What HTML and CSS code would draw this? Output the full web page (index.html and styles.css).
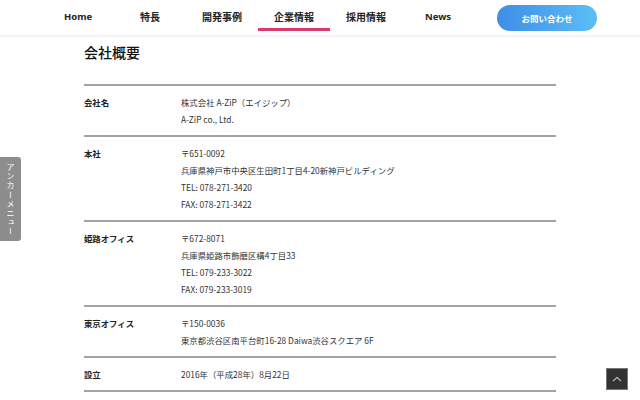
FILE: index.html
```html
<!DOCTYPE html>
<html lang="ja">
<head>
  <meta charset="UTF-8" />
  <meta name="viewport" content="width=device-width, initial-scale=1.0"/>
  <title>会社概要 | 株式会社 A-ZiP</title>
  <link rel="stylesheet" href="styles.css">
</head>
<body>
  <header class="site-header">
    <nav class="global-nav">
      <a href="#" class="nav-item nav-en">Home</a>
      <a href="#" class="nav-item">特長</a>
      <a href="#" class="nav-item">開発事例</a>
      <a href="#" class="nav-item is-current">企業情報</a>
      <a href="#" class="nav-item">採用情報</a>
      <a href="#" class="nav-item nav-en">News</a>
    </nav>
    <a href="#" class="contact-btn">お問い合わせ</a>
  </header>

  <main class="company">
    <h2 class="company-title">会社概要</h2>

    <dl class="company-table">
      <div class="company-row">
        <dt>会社名</dt>
        <dd>株式会社 A-ZiP（エイジップ）<br>A-ZiP co., Ltd.</dd>
      </div>
      <div class="company-row">
        <dt>本社</dt>
        <dd>〒651-0092<br>兵庫県神戸市中央区生田町1丁目4-20新神戸ビルディング<br>TEL: 078-271-3420<br>FAX: 078-271-3422</dd>
      </div>
      <div class="company-row">
        <dt>姫路オフィス</dt>
        <dd>〒672-8071<br>兵庫県姫路市飾磨区構4丁目33<br>TEL: 079-233-3022<br>FAX: 079-233-3019</dd>
      </div>
      <div class="company-row">
        <dt>東京オフィス</dt>
        <dd>〒150-0036<br>東京都渋谷区南平台町16-28 Daiwa渋谷スクエア 6F</dd>
      </div>
      <div class="company-row">
        <dt>設立</dt>
        <dd>2016年（平成28年）8月22日</dd>
      </div>
    </dl>
  </main>

  <!-- side anchor tab -->
  <a href="#" class="anchor-tab">アンカーメニュー</a>

  <!-- page top -->
  <a href="#" class="pagetop" aria-label="ページトップへ">
    <svg width="10" height="6" viewBox="0 0 10 6"><path d="M1 5.2 L5 1.4 L9 5.2" fill="none" stroke="#ccc" stroke-width="1.1"/></svg>
  </a>
</body>
</html>
```

FILE: styles.css
```css
body {
  margin: 0;
  background-color: #fff;
  color: #222;
  font-family: "Noto Sans CJK JP", "Noto Sans", sans-serif;
}

a {
  color: inherit;
  text-decoration: none;
}

/* header */
.site-header {
  display: flex;
  align-items: flex-start;
  height: 36px;
  padding-left: 42px;
  background-color: #fff;
  box-shadow: 0 1px 2px rgba(0,0,0,0.06);
  border-bottom: 1px solid #f2f2f2;
  box-sizing: border-box;
}

.global-nav {
  display: flex;
}

.nav-item {
  display: block;
  width: 72px;
  height: 22px;
  padding-top: 6px;
  line-height: 22px;
  text-align: center;
  font-size: 10px;
  font-weight: bold;
  color: #222;
  border-bottom: 3px solid transparent;
}

.nav-en {
  font-family: "Noto Sans", sans-serif;
  font-size: 9.5px;
}

.nav-item.is-current {
  border-bottom-color: #d83a70;
}

.contact-btn {
  display: block;
  margin: 5px 0 0 23px;
  width: 100px;
  height: 26px;
  line-height: 26px;
  border-radius: 13px;
  text-align: center;
  font-size: 8.5px;
  font-weight: bold;
  color: #fff;
  background: linear-gradient(to right, #3e8ee6, #5cbef6);
}

/* company profile */
.company {
  width: 472px;
  margin: 0 auto;
}

.company-title {
  margin: 6px 0 22px;
  font-size: 14px;
  line-height: 20px;
  font-weight: 500;
  color: #111;
}

.company-table {
  margin: 0;
  border-top: 2px solid #a3a3a3;
  font-size: 8.4px;
  line-height: 17px;
}

.company-row {
  display: flex;
  padding: 8px 0 7px;
  border-bottom: 2px solid #a3a3a3;
}

.company-row dt {
  width: 97px;
  flex-shrink: 0;
  font-weight: bold;
  color: #222;
}

.company-row dd {
  margin: 0;
  color: #333;
}

/* fixed side parts */
.anchor-tab {
  position: fixed;
  left: 0;
  top: 157px;
  width: 21px;
  height: 84px;
  box-sizing: border-box;
  padding-top: 6px;
  background-color: #8d8d8d;
  border-radius: 0 3px 3px 0;
  color: #fff;
  font-size: 8px;
  letter-spacing: 1.2px;
  writing-mode: vertical-rl;
  line-height: 21px;
}

.pagetop {
  position: fixed;
  right: 12px;
  bottom: 10px;
  width: 22px;
  height: 22px;
  box-sizing: border-box;
  display: flex;
  align-items: center;
  justify-content: center;
  background-color: #333;
  border: 1px solid #777;
}
```
